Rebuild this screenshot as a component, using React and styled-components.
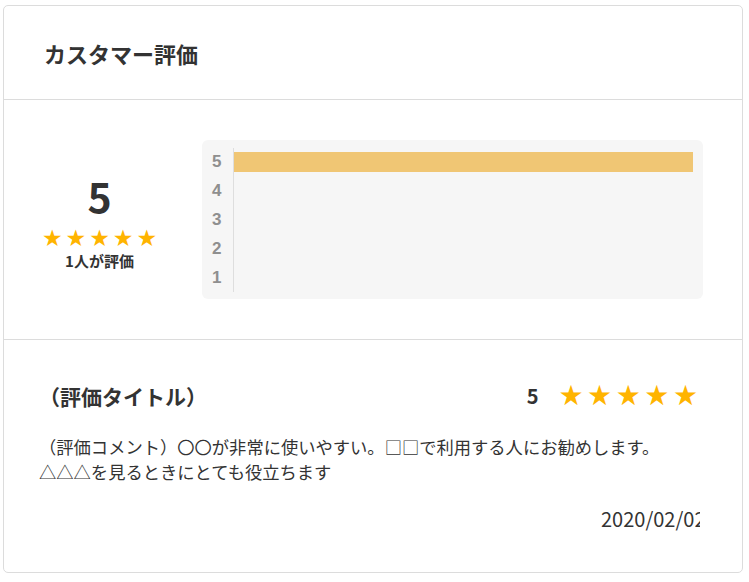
import styled, { createGlobalStyle } from "styled-components";

const GlobalStyle = createGlobalStyle`
  html, body {
    margin: 0;
    padding: 0;
    background: #ffffff;
  }
  body {
    font-family: "Noto Sans CJK JP", "Noto Sans", sans-serif;
    color: #333333;
  }
`;

const ratings = [
  { label: 5, ratio: 1 },
  { label: 4, ratio: 0 },
  { label: 3, ratio: 0 },
  { label: 2, ratio: 0 },
  { label: 1, ratio: 0 },
];

function Stars({ size, gap }) {
  return (
    <StarRow $size={size} $gap={gap}>
      {[0, 1, 2, 3, 4].map((i) => (
        <span key={i}>★</span>
      ))}
    </StarRow>
  );
}

function App() {
  return (
    <>
      <GlobalStyle />
      <Page>
        <Card>
          <Header>
            <Title>カスタマー評価</Title>
          </Header>

          <Summary>
            <Score>
              <ScoreValue>5</ScoreValue>
              <Stars size={23} gap={3} />
              <ScoreCount>1人が評価</ScoreCount>
            </Score>
            <Chart>
              <Labels>
                {ratings.map((r) => (
                  <Label key={r.label}>{r.label}</Label>
                ))}
              </Labels>
              <Bars>
                {ratings.map((r) => (
                  <BarRow key={r.label}>
                    <Bar style={{ width: `${r.ratio * 100}%` }} />
                  </BarRow>
                ))}
              </Bars>
            </Chart>
          </Summary>

          <Review>
            <ReviewHead>
              <ReviewTitle>（評価タイトル）</ReviewTitle>
              <ReviewScore>
                <ReviewValue>5</ReviewValue>
                <Stars size={28} gap={3.5} />
              </ReviewScore>
            </ReviewHead>
            <Comment>
              （評価コメント）〇〇が非常に使いやすい。□□で利用する人にお勧めします。
              <br />
              △△△を見るときにとても役立ちます
            </Comment>
            <DateRow>
              <DateText>2020/02/02</DateText>
            </DateRow>
          </Review>
        </Card>
      </Page>
    </>
  );
}

export default App;

const Page = styled.div`
  padding: 5px 6px 8px 3px;
`;
const Card = styled.div`
  border: 1px solid #dcdcdc;
  border-radius: 5px;
  background: #ffffff;
`;
const Header = styled.div`
  padding: 0 40px;
  height: 93px;
  display: flex;
  align-items: center;
  border-bottom: 1px solid #dcdcdc;
`;
const Title = styled.h2`
  margin: 0;
  font-size: 22px;
  font-weight: 700;
  color: #333333;
`;
const Summary = styled.div`
  display: flex;
  align-items: center;
  gap: 47px;
  padding: 40px 39px 40px 40px;
  border-bottom: 1px solid #dcdcdc;
`;
const Score = styled.div`
  width: 111px;
  display: flex;
  flex-direction: column;
  align-items: center;
  margin-top: 6px;
`;
const ScoreValue = styled.div`
  font-size: 41px;
  font-weight: 700;
  line-height: 44px;
  margin-bottom: 9px;
  color: #333333;
`;
const StarRow = styled.div`
  display: flex;
  gap: ${(p) => p.$gap}px;
  color: #ffb400;
  font-family: "DejaVu Sans", sans-serif;
  font-size: ${(p) => p.$size}px;
  line-height: 1.05;
`;
const ScoreCount = styled.div`
  font-size: 15px;
  font-weight: 700;
  line-height: 22px;
  color: #333333;
`;
const Chart = styled.div`
  flex: 1;
  height: 159px;
  box-sizing: border-box;
  display: flex;
  padding: 8px 10px 7px 10px;
  background: #f6f6f6;
  border-radius: 6px;
`;
const Labels = styled.div`
  width: 21px;
  display: flex;
  flex-direction: column;
`;
const Label = styled.div`
  flex: 1;
  display: flex;
  align-items: center;
  font-family: "Liberation Sans", Arial, sans-serif;
  font-size: 17px;
  font-weight: 700;
  color: #8f8f8f;
`;
const Bars = styled.div`
  flex: 1;
  display: flex;
  flex-direction: column;
  border-left: 1px solid #dedede;
`;
const BarRow = styled.div`
  flex: 1;
  display: flex;
  align-items: center;
`;
const Bar = styled.div`
  height: 20px;
  background: #f0c674;
`;
const Review = styled.div`
  padding: 38px 40px 40px 40px;
`;
const ReviewHead = styled.div`
  display: flex;
  align-items: center;
  justify-content: space-between;
`;
const ReviewTitle = styled.h3`
  margin: 0 0 0 -5px;
  font-size: 21px;
  font-weight: 700;
  line-height: 36px;
  color: #333333;
`;
const ReviewScore = styled.div`
  display: flex;
  align-items: center;
  gap: 20px;
  margin-right: 4px;
`;
const ReviewValue = styled.span`
  font-size: 20px;
  font-weight: 700;
  color: #333333;
`;
const Comment = styled.p`
  margin: 20px 0 0 -5px;
  font-size: 17.3px;
  line-height: 25px;
  color: #333333;
`;
const DateRow = styled.div`
  display: flex;
  justify-content: flex-end;
  margin-top: 22px;
  margin-right: 2px;
`;
const DateText = styled.div`
  width: 99px;
  overflow: hidden;
  white-space: nowrap;
  font-size: 20px;
  line-height: 26px;
  color: #333333;
`;
